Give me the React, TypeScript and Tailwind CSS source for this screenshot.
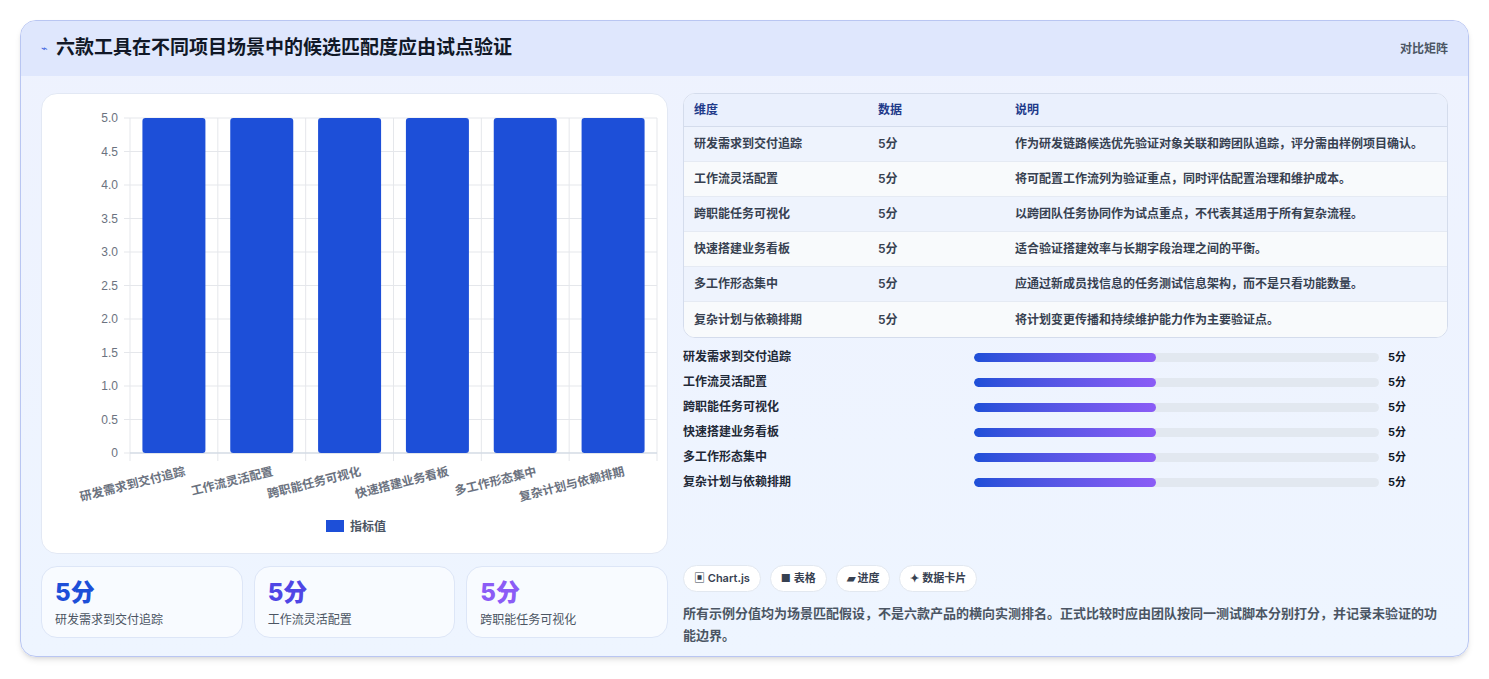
import React from "react";

const items = ["研发需求到交付追踪","工作流灵活配置","跨职能任务可视化","快速搭建业务看板","多工作形态集中","复杂计划与依赖排期"];
const notes = [
  "作为研发链路候选优先验证对象关联和跨团队追踪，评分需由样例项目确认。",
  "将可配置工作流列为验证重点，同时评估配置治理和维护成本。",
  "以跨团队任务协同作为试点重点，不代表其适用于所有复杂流程。",
  "适合验证搭建效率与长期字段治理之间的平衡。",
  "应通过新成员找信息的任务测试信息架构，而不是只看功能数量。",
  "将计划变更传播和持续维护能力作为主要验证点。",
];

function Chart() {
  const x0 = 88, x1 = 615, y0 = 24, y1 = 359;
  const ticks = [0,0.5,1,1.5,2,2.5,3,3.5,4,4.5,5];
  const slot = (x1 - x0) / 6;
  return (
    <svg width="627" height="460" className="block">
      {ticks.map(t => {
        const y = y1 - (t / 5) * (y1 - y0);
        return (
          <g key={t}>
            <line x1={x0 - 6} x2={x1} y1={y} y2={y} stroke="#e5e7eb" />
            <text x={x0 - 12} y={y + 4} textAnchor="end" fontSize="12" fill="#6b7280" fontFamily="Liberation Sans, sans-serif">{t === 0 ? "0" : t.toFixed(1)}</text>
          </g>
        );
      })}
      {Array.from({ length: 7 }).map((_, i) => (
        <line key={i} x1={x0 + i * slot} x2={x0 + i * slot} y1={y0} y2={y1 + 8} stroke="#e5e7eb" />
      ))}
      <line x1={x0} x2={x1} y1={y1} y2={y1} stroke="#cbd5e1" />
      {items.map((it, i) => {
        const cx = x0 + i * slot + slot / 2;
        return (
          <g key={it}>
            <rect x={cx - 31.5} y={y0} width="63" height={y1 - y0} rx="3" fill="#1d4fd8" />
            <text x={cx + 12} y={y1 + 22} textAnchor="end" fontSize="12" fontWeight="600" fill="#6b7280" transform={`rotate(-14 ${cx + 12} ${y1 + 22})`} fontFamily="Noto Sans CJK SC, sans-serif">{it}</text>
          </g>
        );
      })}
      <rect x="284" y="426" width="18" height="12" fill="#1d4fd8" />
      <text x="308" y="437" fontSize="12" fill="#4b5563" fontWeight="600" fontFamily="Noto Sans CJK SC, sans-serif">指标值</text>
    </svg>
  );
}

export default function App() {
  const font = { fontFamily: "Inter, 'Noto Sans CJK SC', sans-serif" };
  return (
    <div className="w-[1489px] h-[679px] bg-white p-5" style={font}>
      <div className="h-[637px] rounded-2xl border border-[#b9c6f2] overflow-hidden bg-gradient-to-b from-[#eef2fe] to-[#eef5ff] shadow-md flex flex-col">
        <div className="h-[55px] shrink-0 bg-[#dfe7fd] flex items-center justify-between px-5">
          <div className="flex items-center gap-2">
            <span className="text-[#3b63e0] text-[11px]">⌁</span>
            <span className="text-[19px] font-bold text-[#111827]">六款工具在不同项目场景中的候选匹配度应由试点验证</span>
          </div>
          <span className="text-[12px] text-[#4b5563] font-semibold">对比矩阵</span>
        </div>
        <div className="flex gap-[15px] px-5 pt-[17px]">
          <div className="w-[627px] flex flex-col gap-[12px]">
            <div className="h-[461px] bg-white rounded-2xl border border-[#e2e8f4] overflow-hidden"><Chart /></div>
            <div className="grid grid-cols-3 gap-[11px]">
              {items.slice(0, 3).map((it, i) => (
                <div key={it} className="h-[72px] rounded-2xl border border-[#dde6f7] bg-[#f8fbff] px-[13px] pt-[10px]">
                  <div className={`text-[24px] font-extrabold leading-[32px] ${["text-[#1d4fd8]","text-[#4f46e5]","text-[#8b5cf6]"][i]}`}>5分</div>
                  <div className="text-[12px] text-[#4b5563] mt-[2px]">{it}</div>
                </div>
              ))}
            </div>
          </div>
          <div className="w-[767px] flex flex-col">
            <div className="rounded-xl border border-[#d4dcec] overflow-hidden bg-white">
              <div className="grid grid-cols-[184px_137px_1fr] h-[33px] items-center bg-[#eaf0fd] border-b border-[#d4dcec] px-[10px] text-[12px] font-semibold text-[#1e3a8a]">
                <span>维度</span><span>数据</span><span>说明</span>
              </div>
              {items.map((it, i) => (
                <div key={it} className={`grid grid-cols-[184px_137px_1fr] h-[35px] items-center px-[10px] text-[12px] font-semibold text-[#374151] ${i < 5 ? "border-b border-[#e5eaf3]" : ""} ${i % 2 ? "bg-[#f8fafc]" : "bg-[#eef3fd]"}`}>
                  <span>{it}</span><span>5分</span><span>{notes[i]}</span>
                </div>
              ))}
            </div>
            <div className="flex flex-col gap-[9px] mt-[11px]">
              {items.map(it => (
                <div key={it} className="flex items-center h-[16px] text-[12px] font-semibold text-[#1f2937]">
                  <span className="w-[291px]">{it}</span>
                  <div className="w-[405px] h-[9px] rounded-full bg-[#e2e8f0] overflow-hidden">
                    <div className="h-full w-[45%] rounded-full bg-gradient-to-r from-[#1d4fd8] to-[#8b5cf6]" />
                  </div>
                  <span className="ml-[9px] text-[11px] font-bold text-[#111827]">5分</span>
                </div>
              ))}
            </div>
            <div className="flex gap-[9px] mt-[75px]">
              {["▣ Chart.js","■ 表格","▰ 进度","✦ 数据卡片"].map(c => (
                <span key={c} className="h-[27px] px-[10px] rounded-full bg-white border border-[#e2e8f0] text-[11px] font-semibold text-[#374151] flex items-center">{c}</span>
              ))}
            </div>
            <p className="mt-[10px] text-[13px] leading-[22px] text-[#4b5563] font-semibold">所有示例分值均为场景匹配假设，不是六款产品的横向实测排名。正式比较时应由团队按同一测试脚本分别打分，并记录未验证的功能边界。</p>
          </div>
        </div>
      </div>
    </div>
  );
}
